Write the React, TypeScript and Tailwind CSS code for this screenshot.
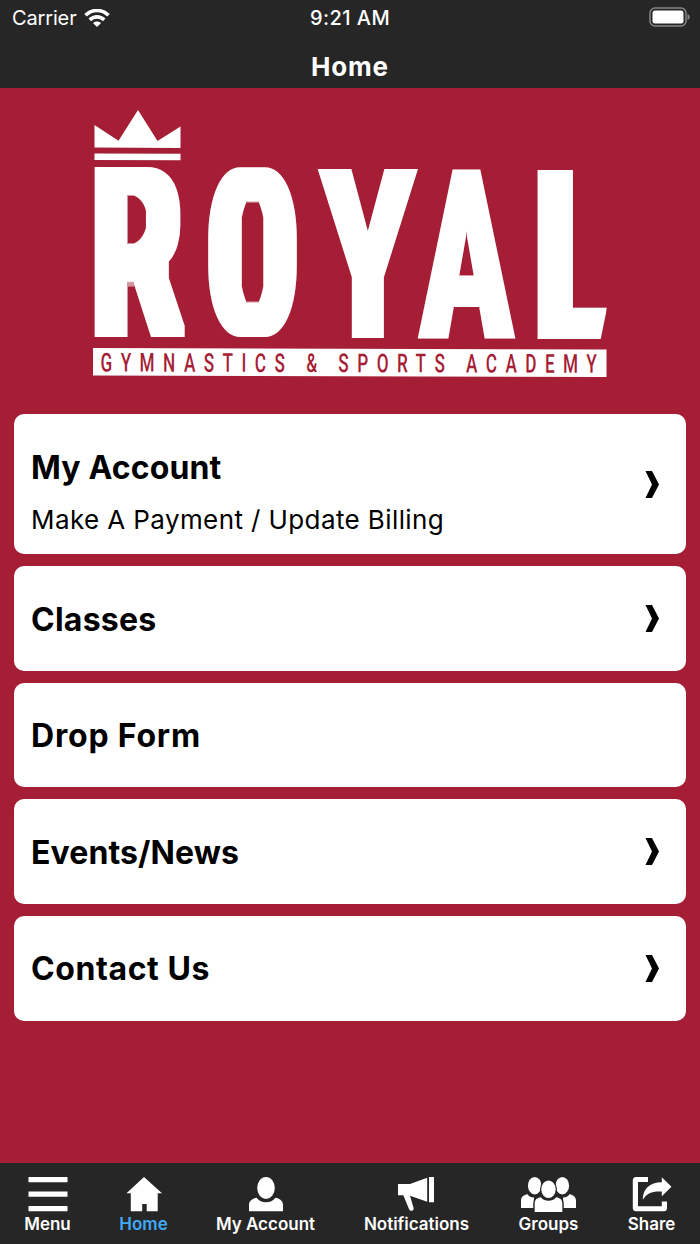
import type { ReactNode } from "react";

type MenuItem = { title: string; tracking: string; subtitle?: string; arrow: boolean };

const MENU_ITEMS: MenuItem[] = [
  { title: "My Account", tracking: "tracking-[0.15px]", subtitle: "Make A Payment / Update Billing", arrow: true },
  { title: "Classes", tracking: "tracking-[0.25px]", arrow: true },
  { title: "Drop Form", tracking: "tracking-[0.8px]", arrow: false },
  { title: "Events/News", tracking: "tracking-[0.1px]", arrow: true },
  { title: "Contact Us", tracking: "tracking-[0.6px]", arrow: true },
];

const TABS: { label: string; width: string; icon: ReactNode; active?: boolean }[] = [
  {
    label: "Menu",
    width: "w-[46px]",
    icon: (
      <svg width="40" height="35" viewBox="0 0 40 35" fill="currentColor">
        <path d="M.5 0h39v5.3H.5zM.5 14.5h39v5.2H.5zM.5 29h39v5.3H.5z" />
      </svg>
    ),
  },
  {
    label: "Home",
    width: "w-[48px]",
    active: true,
    icon: (
      <svg width="36" height="35" viewBox="0 0 36 35" fill="#fff">
        <path d="M18 0 36 16.2H31.7V34.3H20.7V27H16.2V34.3H4.8V16.2H.5z" />
      </svg>
    ),
  },
  {
    label: "My Account",
    width: "w-[98px]",
    icon: (
      <svg width="34" height="35" viewBox="0 0 34 35" fill="currentColor">
        <ellipse cx="17" cy="11" rx="8.8" ry="11" />
        <path d="M0 34.3V28C0 23.5 3.5 21.5 7.5 20.8C10 24 13 25.3 17 25.3S24 24 26.5 20.8C30.5 21.5 34 23.5 34 28V34.3z" />
      </svg>
    ),
  },
  {
    label: "Notifications",
    width: "w-[106px]",
    icon: (
      <svg width="36" height="35" viewBox="0 0 36 35" fill="currentColor" className="-ml-px">
        <path d="M0 7H12L29.2.8V24.7L12 18.7 15.6 31C16.2 33.8 12.5 35 11.2 32.5L5.3 18.3H0zM31 0H36V25.3H31z" />
      </svg>
    ),
  },
  {
    label: "Groups",
    width: "w-[60px]",
    icon: (
      <svg width="55" height="35" viewBox="0 0 55 35" fill="currentColor">
        <ellipse cx="13.7" cy="8.7" rx="6.8" ry="8.7" />
        <ellipse cx="41.3" cy="8.7" rx="6.8" ry="8.7" />
        <path d="M0 31V24C0 20 2.5 18 6.5 17.3 8 19.5 10 20.5 13 20.5L12.5 31zM55 31V24C55 20 52.5 18 48.5 17.3 47 19.5 45 20.5 42 20.5L42.5 31z" />
        <g stroke="#262626" strokeWidth="2.6" paintOrder="stroke">
          <ellipse cx="27.5" cy="12.3" rx="7.2" ry="8.8" />
          <path d="M13.7 36V26.5C13.7 22.5 16 20.8 19.8 20.2 22 23 24.5 23.7 27.5 23.7S33 23 35.2 20.2C39 20.8 41.3 22.5 41.3 26.5V36z" />
        </g>
      </svg>
    ),
  },
  {
    label: "Share",
    width: "w-[48px]",
    icon: (
      <svg width="40" height="35" viewBox="0 0 40 35" fill="currentColor">
        <path d="M16 0V5H6V29.3H29.8V24.5H35V31C35 33 34 34.3 32 34.3H4C2 34.3.8 33 .8 31V3.5C.8 1.3 2 0 4 0z" />
        <path d="M29.8.3 39.5 9.8 29.8 19.3V14.5C21 14 15 15.5 10.8 22.8C10.8 12 17.5 5.5 29.8 5.3z" />
      </svg>
    ),
  },
];

const STRAIGHT = "text-[238px] font-black";

// Each letter is squeezed to its own box so the word reads as a tall condensed logotype.
const LETTERS = [
  { char: "R", x: 0.5, y: 222, sx: 0.605, sy: 1, font: "text-[224px] font-normal", filter: "url(#bowl)" },
  { char: "O", x: 120, y: 221, sx: 0.516, sy: 0.98, font: "text-[226px] font-light", filter: "url(#ring)" },
  { char: "Y", x: 228, y: 228, sx: 0.627, sy: 1, font: STRAIGHT, filter: "url(#thicken)" },
  { char: "A", x: 328, y: 228.5, sx: 0.562, sy: 1, font: STRAIGHT, filter: "url(#thicken)" },
  { char: "L", x: 446.5, y: 229, sx: 0.474, sy: 1, font: STRAIGHT, filter: "url(#stem)" },
];

function Logo() {
  return (
    <svg
      width="514"
      height="268"
      viewBox="0 0 514 268"
      fill="#fff"
      className="mx-auto mt-[22px] block overflow-visible font-['Roboto',sans-serif]"
    >
      <defs>
        <filter id="bowl" x="-50%" y="-50%" width="200%" height="200%">
          <feMorphology operator="dilate" radius="13 13" />
          <feMorphology operator="erode" radius="3 8" />
        </filter>
        <filter id="ring" x="-50%" y="-50%" width="200%" height="200%">
          <feMorphology operator="dilate" radius="18 38" />
          <feMorphology operator="erode" radius="6 34" />
        </filter>
        <filter id="thicken" x="-10%" y="-10%" width="120%" height="120%">
          <feMorphology operator="dilate" radius="3 0" />
        </filter>
        <filter id="stem" x="-20%" y="-10%" width="140%" height="120%">
          <feMorphology operator="dilate" radius="8 0" />
        </filter>
      </defs>
      <path d="M1.5 15 25.5 30.8 45 0 64.5 31 87.5 16.5V38L1.5 37.5zM1.5 43.5 87.5 43.8V50.3L1.5 50z" />
      {LETTERS.map((l) => (
        <g key={l.char} filter={l.filter} className={l.font}>
          <text transform={`translate(${l.x} ${l.y}) scale(${l.sx} ${l.sy})`}>{l.char}</text>
        </g>
      ))}
      <path d="M515 195V230H507.5L514 198z" fill="#a51e36" />
      <path d="M0 238 513.5 239.5V267L0 265.5z" />
      <text
        transform="translate(7.5 261.5) rotate(.15) scale(.66 1)"
        textLength="752"
        fill="#a51e36"
        className="text-[26px] font-medium"
      >
        GYMNASTICS &amp; SPORTS ACADEMY
      </text>
    </svg>
  );
}

function StatusBar() {
  return (
    <div className="grid h-9 grid-cols-3 items-center pl-3 pr-[9px] text-[20px] leading-9">
      <div className="flex items-center gap-[7px]">
        <span className="tracking-[-0.15px]">Carrier</span>
        <svg width="26" height="19" viewBox="0 0 26 19" fill="none" stroke="#fff" strokeWidth="3.7">
          <path d="M1.5 6.3C8-.1 18-.1 24.5 6.3M5.8 10.8C10 6.8 16 6.8 20.2 10.8" />
          <path d="M13 18 8.9 14.1C11.2 11.9 14.8 11.9 17.1 14.1z" fill="#fff" stroke="none" />
        </svg>
      </div>
      <div className="-ml-[3px] text-center font-medium tracking-[0.45px]">9:21 AM</div>
      <svg width="42" height="20" viewBox="0 0 42 20" className="-mt-0.5 justify-self-end">
        <rect x="1" y="1" width="36" height="18" rx="5" fill="none" stroke="#858585" strokeWidth="1.5" />
        <rect x="3.5" y="3.5" width="31" height="13" rx="2.5" fill="#fff" />
        <path d="M38.5 7C41.5 8 41.5 12 38.5 13z" fill="#858585" />
      </svg>
    </div>
  );
}

export default function App() {
  return (
    <div className="flex h-[1244px] w-[700px] flex-col overflow-hidden bg-[#a51e36] font-['Inter','Liberation_Sans',sans-serif]">
      <header className="h-[88px] shrink-0 bg-[#262626] text-white">
        <StatusBar />
        <h1 className="mt-[11px] text-center text-[26px] font-bold leading-10 tracking-[0.8px]">Home</h1>
      </header>

      <main className="flex-1">
        <Logo />
        <div className="mx-3.5 mt-9 flex flex-col gap-3">
          {MENU_ITEMS.map((item) => (
            <div
              key={item.title}
              className={`flex items-center justify-between rounded-[10px] bg-white pl-[17px] pr-[27px] text-black ${
                item.subtitle ? "h-[140.3px]" : "h-[104.6px]"
              }`}
            >
              <div className={item.subtitle ? "pt-5" : "pt-0.5"}>
                <h2 className={`text-[32px] font-bold leading-10 ${item.tracking}`}>{item.title}</h2>
                {item.subtitle && (
                  <p className="mt-3 text-[26px] leading-10 tracking-[0.4px]">{item.subtitle}</p>
                )}
              </div>
              {item.arrow && (
                <svg width="14" height="27" viewBox="0 0 14 27">
                  <path d="M.5 0H7L14 13.5 7 27H.5L7 13.5z" />
                </svg>
              )}
            </div>
          ))}
        </div>
      </main>

      <nav className="flex h-[81.5px] shrink-0 justify-between bg-[#262626] pl-[24.5px] pr-[24.5px] pt-[14.5px] text-white">
        {TABS.map((tab) => (
          <div key={tab.label} className={`flex flex-col items-center ${tab.width}`}>
            {tab.icon}
            <span
              className={`mt-0.5 whitespace-nowrap text-[17px] font-semibold leading-5 ${
                tab.active ? "text-[#3fa9f5]" : ""
              }`}
            >
              {tab.label}
            </span>
          </div>
        ))}
      </nav>
    </div>
  );
}
